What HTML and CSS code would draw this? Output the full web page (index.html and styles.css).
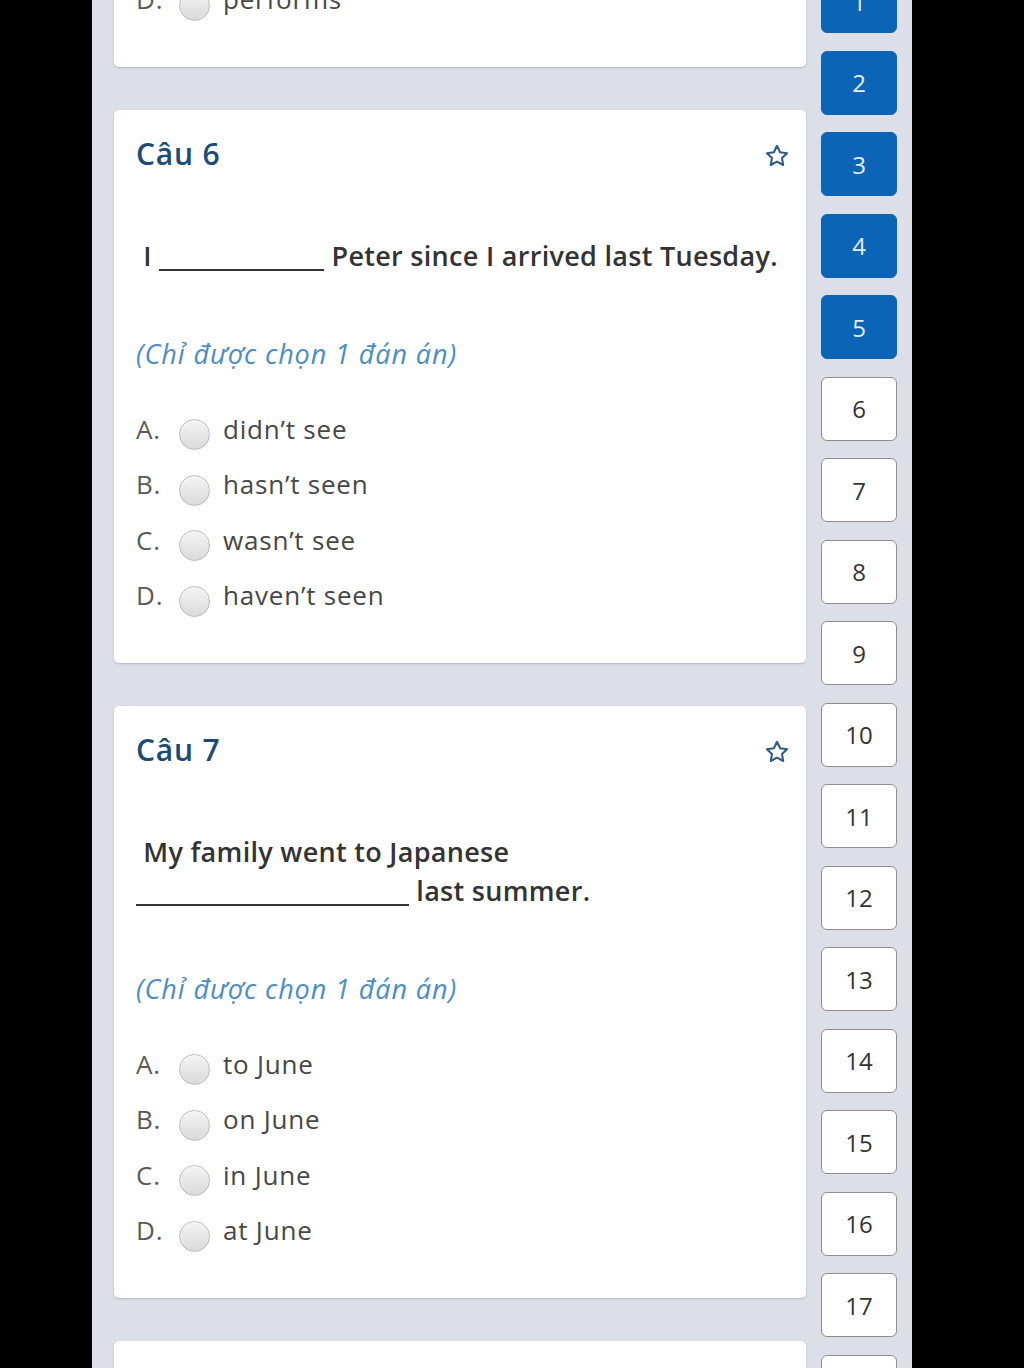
FILE: index.html
```html
<!DOCTYPE html>
<html lang="vi">
<head>
<meta charset="utf-8">
<title>Bài kiểm tra</title>
<link rel="stylesheet" href="styles.css">
</head>
<body>
<div class="page">
  <main class="questions">
    <section class="card">
      <div class="options">
        <div class="option"><span class="letter">D.</span><span class="radio"></span><span class="text">performs</span></div>
      </div>
    </section>

    <section class="card">
      <header class="card-head">
        <h2 class="title">Câu 6</h2>
        <svg class="star" viewBox="0 0 24 24" width="26" height="26"><path d="M12 2.6l2.85 5.9 6.45.9-4.7 4.5 1.15 6.4L12 17.2l-5.75 3.1 1.15-6.4-4.7-4.5 6.45-.9z"/></svg>
      </header>
      <p class="question">&nbsp;I <span class="blank blank-short"></span> Peter since I arrived last Tuesday.</p>
      <p class="note">(Chỉ được chọn 1 đán án)</p>
      <div class="options">
        <div class="option"><span class="letter">A.</span><span class="radio"></span><span class="text">didn’t see</span></div>
        <div class="option"><span class="letter">B.</span><span class="radio"></span><span class="text">hasn’t seen</span></div>
        <div class="option"><span class="letter">C.</span><span class="radio"></span><span class="text">wasn’t see</span></div>
        <div class="option"><span class="letter">D.</span><span class="radio"></span><span class="text">haven’t seen</span></div>
      </div>
    </section>

    <section class="card">
      <header class="card-head">
        <h2 class="title">Câu 7</h2>
        <svg class="star" viewBox="0 0 24 24" width="26" height="26"><path d="M12 2.6l2.85 5.9 6.45.9-4.7 4.5 1.15 6.4L12 17.2l-5.75 3.1 1.15-6.4-4.7-4.5 6.45-.9z"/></svg>
      </header>
      <p class="question">&nbsp;My family went to Japanese <span class="blank blank-long"></span> last summer.</p>
      <p class="note">(Chỉ được chọn 1 đán án)</p>
      <div class="options">
        <div class="option"><span class="letter">A.</span><span class="radio"></span><span class="text">to June</span></div>
        <div class="option"><span class="letter">B.</span><span class="radio"></span><span class="text">on June</span></div>
        <div class="option"><span class="letter">C.</span><span class="radio"></span><span class="text">in June</span></div>
        <div class="option"><span class="letter">D.</span><span class="radio"></span><span class="text">at June</span></div>
      </div>
    </section>

    <section class="card">
      <header class="card-head">
        <h2 class="title">Câu 8</h2>
        <svg class="star" viewBox="0 0 24 24" width="26" height="26"><path d="M12 2.6l2.85 5.9 6.45.9-4.7 4.5 1.15 6.4L12 17.2l-5.75 3.1 1.15-6.4-4.7-4.5 6.45-.9z"/></svg>
      </header>
    </section>
  </main>

  <nav class="sidebar">
    <a class="num done">1</a>
    <a class="num done">2</a>
    <a class="num done">3</a>
    <a class="num done">4</a>
    <a class="num done">5</a>
    <a class="num">6</a>
    <a class="num">7</a>
    <a class="num">8</a>
    <a class="num">9</a>
    <a class="num">10</a>
    <a class="num">11</a>
    <a class="num">12</a>
    <a class="num">13</a>
    <a class="num">14</a>
    <a class="num">15</a>
    <a class="num">16</a>
    <a class="num">17</a>
    <a class="num">18</a>
  </nav>
</div>
</body>
</html>
```

FILE: styles.css
```css
html, body {
  margin: 0;
  padding: 0;
  height: 1368px;
  overflow: hidden;
  background: #000;
}

.page {
  margin-left: 92px;
  width: 820px;
  height: 1368px;
  overflow: hidden;
  background: #dcdfe8;
  display: flex;
  align-items: flex-start;
  font-family: "Open Sans", "Noto Sans", sans-serif;
}

.questions {
  width: 692px;
  margin-left: 22px;
  margin-top: -50.75px;
  display: flex;
  flex-direction: column;
  gap: 43px;
  flex-shrink: 0;
}

.card {
  background: #fff;
  border-radius: 5px;
  box-shadow: 0 1px 2px rgba(60, 70, 100, 0.25);
  padding: 22px 22px 40px 22px;
}

.card-head {
  display: flex;
  align-items: center;
  justify-content: space-between;
}

.title {
  margin: 0;
  font-size: 30px;
  line-height: 44px;
  font-weight: 600;
  letter-spacing: 0.8px;
  color: #1c4c74;
}

.star {
  margin-top: 4px;
  margin-right: -6px;
  fill: none;
  stroke: #2d5d86;
  stroke-width: 1.9;
  stroke-linejoin: round;
}

.question {
  margin: 60px 0 0;
  font-size: 27px;
  line-height: 39px;
  font-weight: 600;
  letter-spacing: 0.3px;
  color: #333;
}

.blank {
  display: inline-block;
  height: 0;
  border-bottom: 2px solid #333;
  vertical-align: -5px;
}

.blank-short { width: 165px; }
.blank-long { width: 273px; }

.note {
  margin: 61px 0 0;
  font-size: 27px;
  line-height: 36px;
  font-style: italic;
  letter-spacing: 0.9px;
  color: #4a8dc6;
}

.options {
  margin-top: 29px;
}

.card:first-child .options {
  margin-top: 0;
}

.option {
  display: flex;
  align-items: center;
  height: 55.5px;
  font-size: 26px;
  letter-spacing: 0.8px;
  color: #474747;
}

.letter {
  width: 43px;
  color: #5a5a5a;
}

.radio {
  width: 31px;
  height: 31px;
  box-sizing: border-box;
  margin-top: 12px;
  margin-right: 13px;
  border-radius: 50%;
  border: 1px solid #bcbcbc;
  background: linear-gradient(#f4f4f4, #dadada);
  box-shadow: inset 0 1px 1px rgba(255, 255, 255, 0.8);
  flex-shrink: 0;
}

.sidebar {
  width: 76px;
  margin-left: 15px;
  margin-top: -31px;
  display: flex;
  flex-direction: column;
  gap: 17.5px;
  flex-shrink: 0;
}

.num {
  height: 64px;
  box-sizing: border-box;
  border-radius: 6px;
  border: 1px solid #8e8e8e;
  background: #fff;
  color: #333;
  font-size: 24px;
  display: flex;
  align-items: center;
  justify-content: center;
}

.num.done {
  background: #0b64b5;
  border-color: #0b64b5;
  color: #e3eeff;
}
```
